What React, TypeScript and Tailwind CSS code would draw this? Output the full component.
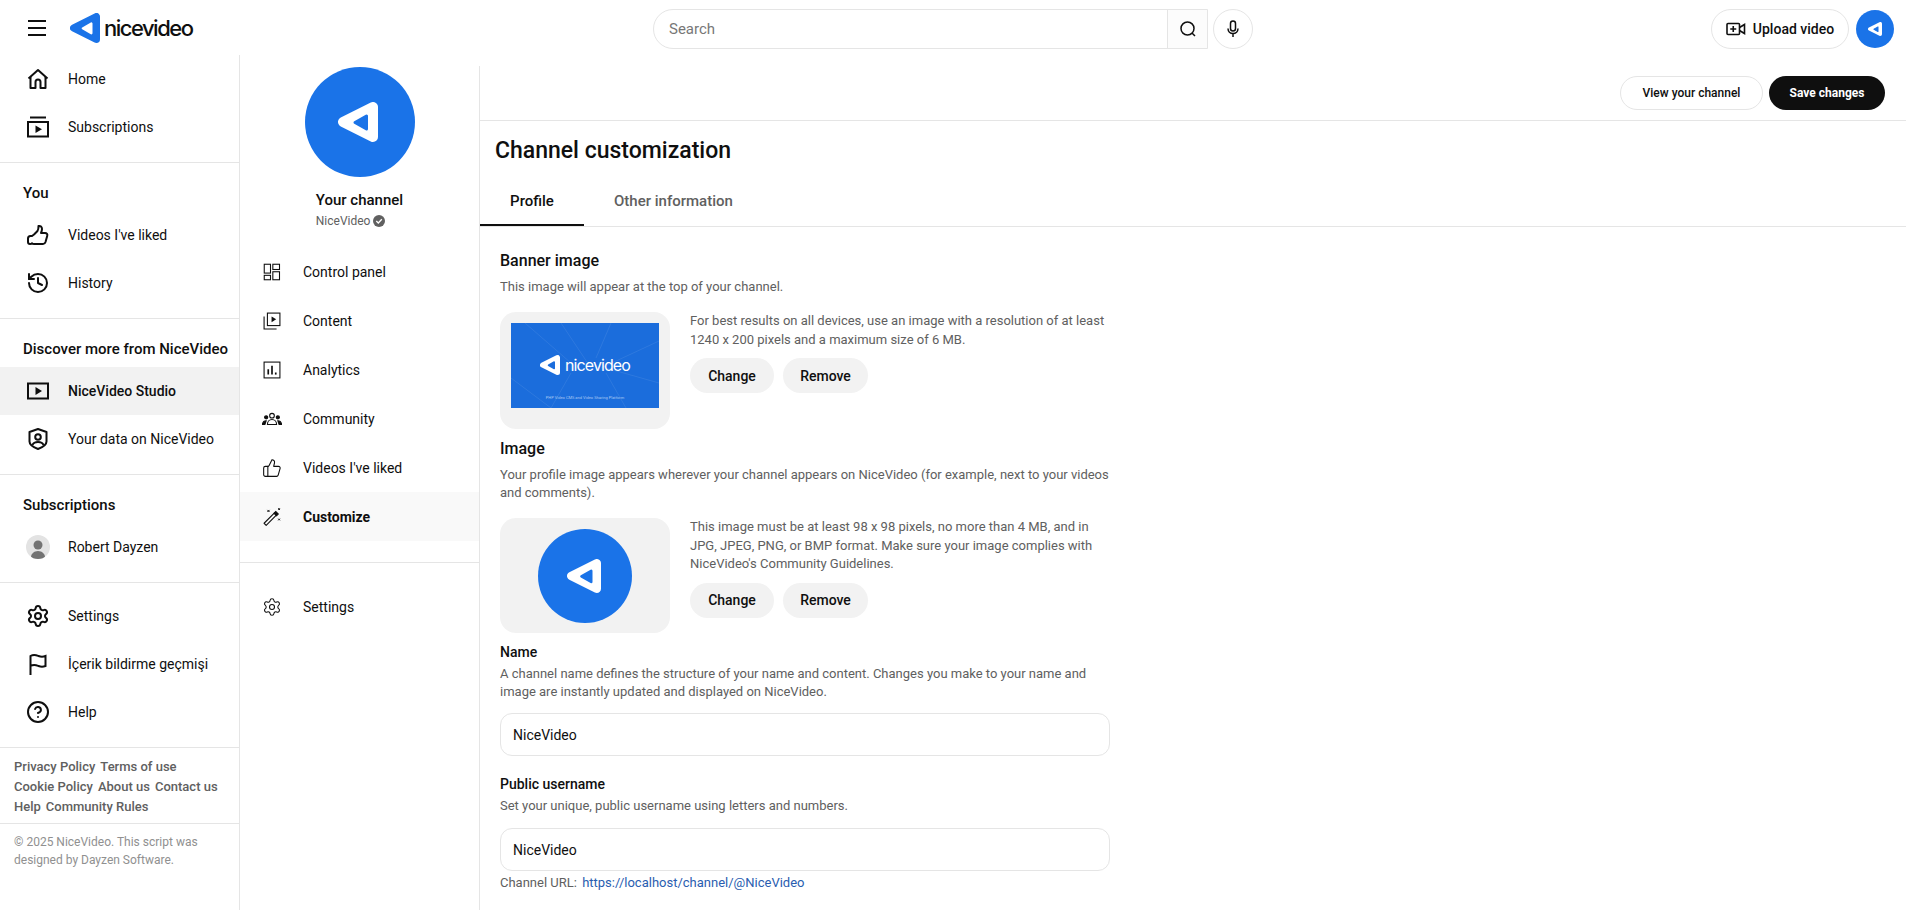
import { CircleHelp, History, Settings, ThumbsUp } from "lucide-react";
import type { ReactNode } from "react";

const Icon = ({ children, size = 24, sw = 2 }: { children: ReactNode; size?: number; sw?: number }) => (
    <svg width={size} height={size} viewBox="0 0 24 24" fill="none" stroke="currentColor" strokeWidth={sw} className="shrink-0">
        {children}
    </svg>
);

// rounded triangle logo mark, hole colour is whatever sits behind it
const Mark = ({ color, hole, className }: { color: string; hole: string; className: string }) => (
    <svg viewBox="0 0 40 40" className={className}>
        <polygon points="5,20 35,5 35,35" fill={color} stroke={color} strokeWidth="10" strokeLinejoin="round" />
        <polygon points="17,20.500 28.500,14 28.500,27" fill={hole} stroke={hole} strokeWidth="3" strokeLinejoin="round" />
    </svg>
);

const HomeIcon = () => (
    <Icon>
        <path d="M2.500 11.500 12 3l9.500 8.500" strokeLinejoin="round" />
        <path d="M4.500 10v11h5v-6a2.500 2.500 0 0 1 5 0v6h5V10" strokeLinejoin="round" />
    </Icon>
);
const SubsIcon = () => (
    <Icon>
        <path d="M4 2.500h16" />
        <rect x="2" y="7" width="20" height="14.500" />
        <path d="M9.500 10.500v7.500l6.500-3.750z" fill="currentColor" stroke="none" />
    </Icon>
);
const HandIcon = () => (
    <Icon>
        <path d="M8 11.500 11.500 8c.8-1 1-3.200 1-5 2-.5 3.500 1 3.500 3 0 1.500-.5 2.800-1 4h4c1.800 0 2.800 1.500 2.200 3l-1.700 6c-.4 1.300-1.300 2-2.500 2H8c-1 0-1.500-.3-2-.8-.5.500-1.200.8-2 .8-1 0-2-1-2-2v-3.500c0-1.500 1-2.500 2.500-2.500H6z" strokeLinejoin="round" />
    </Icon>
);
const StudioIcon = () => (
    <Icon>
        <rect x="2" y="4.500" width="20" height="15" />
        <path d="M9.500 8v8l6.500-4z" fill="currentColor" stroke="none" />
    </Icon>
);
const ShieldIcon = () => (
    <Icon>
        <path d="M12 2 20.500 5v9.500c0 3.500-4.500 6-8.500 7.500-4-1.500-8.500-4-8.500-7.500V5z" strokeLinejoin="round" />
        <circle cx="12" cy="10" r="2.800" />
        <path d="M6.500 18c.8-2 3-3 5.500-3s4.700 1 5.500 3" />
    </Icon>
);
const FlagIcon = () => (
    <Icon>
        <path d="M4.500 23V4c3.500-2 6-.8 8 0s4 1.200 7 0v10c-3 1.200-5 .8-7 0s-4.500-2-8 0" />
    </Icon>
);
const PersonAvatar = () => (
    <div className="flex h-6 w-6 shrink-0 items-end justify-center overflow-hidden rounded-full bg-[#e3e3e3]">
        <svg width="14" height="19" viewBox="0 0 14 19" fill="#737373">
            <circle cx="7" cy="5" r="4.500" />
            <path d="M0 19v-2c0-3 3-6 7-6s7 3 7 6v2z" />
        </svg>
    </div>
);

const DashIcon = () => (
    <Icon size={20} sw={1.3}>
        <rect x="2.700" y="2.700" width="7.500" height="10.600" />
        <rect x="13" y="2.700" width="8" height="6.300" />
        <rect x="2.700" y="16" width="7.500" height="5.300" />
        <rect x="13" y="11.700" width="8" height="9.600" />
    </Icon>
);
const ContentIcon = () => (
    <Icon size={20} sw={1.3}>
        <rect x="6.500" y="2.500" width="15" height="15" />
        <path d="M2.500 6.500v15h15" />
        <path d="M11.500 6.500v7l5.500-3.500z" fill="currentColor" stroke="none" />
    </Icon>
);
const ChartIcon = () => (
    <Icon size={20} sw={1.3}>
        <rect x="2.500" y="2.500" width="19" height="19" />
        <path d="M7.500 11v6.500M12 7v10.500" strokeWidth="2" />
        <path d="M16.500 15v2.500" strokeWidth="2" />
    </Icon>
);
const CommunityIcon = () => (
    <Icon size={20} sw={1.3}>
        <circle cx="12" cy="8" r="2.800" />
        <path d="M6.500 18.500c0-3.500 2.500-6 5.500-6s5.500 2.500 5.500 6z" />
        <circle cx="5" cy="10" r="1.900" fill="currentColor" />
        <circle cx="19" cy="10" r="1.900" fill="currentColor" />
        <path d="M.500 18.500c.3-2.500 2-4.500 4.500-4.500l-1.500 4.500zM23.500 18.500c-.3-2.500-2-4.500-4.500-4.500l1.500 4.500z" fill="currentColor" />
    </Icon>
);
const WandIcon = () => (
    <Icon size={20} sw={1.3}>
        <path d="M2.500 19.500 15 7l2.500 2.500L5 22z" strokeLinejoin="round" />
        <path d="M14 8l2.500-2.500 3 3L17 11" fill="currentColor" />
        <path d="M6.500 3.500l2.500 2.500M9 3.500 6.500 6M19.500 1.500l2 2M21.500 1.500l-2 2M19.500 14l2 2M21.500 14l-2 2" strokeWidth="1.200" />
    </Icon>
);

const navRow = "flex h-12 items-center gap-[18px] pl-[26px] text-sm text-[#0f0f0f]";
const NavRow = ({ icon, label, active }: { icon: ReactNode; label: string; active?: boolean }) => (
    <div className={`${navRow} ${active ? "bg-[#f2f2f2] font-medium" : ""}`}>
        {icon}
        <span>{label}</span>
    </div>
);

const SubRow = ({ icon, label, active }: { icon: ReactNode; label: string; active?: boolean }) => (
    <div className={`flex h-[49px] items-center gap-[21px] pl-[22px] text-sm text-[#0f0f0f] ${active ? "bg-[#f9f9f9] font-bold" : ""}`}>
        {icon}
        <span>{label}</span>
    </div>
);

const SideHeading = ({ children }: { children: ReactNode }) => (
    <div className="h-12 whitespace-nowrap pl-[23px] pt-[18px] text-[15px] leading-6 font-medium text-[#0f0f0f]">{children}</div>
);

const Section = ({ children }: { children: ReactNode }) => <div className="border-b border-[#e5e5e5] pb-[11px]">{children}</div>;

const ChipButtons = () => (
    <div className="mt-[9px] flex gap-[9px]">
        <button className="h-[35px] w-[84px] rounded-full bg-[#f2f2f2] text-sm font-medium text-[#0f0f0f]">Change</button>
        <button className="h-[35px] w-[85px] rounded-full bg-[#f2f2f2] text-sm font-medium text-[#0f0f0f]">Remove</button>
    </div>
);

const LogoText = ({ className }: { className: string }) => (
    <span className={`font-['Inter',sans-serif] font-medium ${className}`}>nicevideo</span>
);

const Banner = () => (
    <div className="relative flex h-[85px] w-[148px] flex-col items-center overflow-hidden bg-[#1b6ddc]">
        <svg viewBox="0 0 148 85" className="absolute inset-0 h-full w-full" fill="none" stroke="#ffffff" strokeOpacity="0.12" strokeWidth="0.7">
            <path d="M14 0 60 40M50 0l30 45M148 18 90 45M148 60 95 45M0 55l40 30M60 50 40 85M95 50l20 35M100 0 85 35" />
        </svg>
        <div className="relative mt-[30px] flex items-center gap-[5px]">
            <Mark color="#ffffff" hole="#1b6ddc" className="h-[24px] w-[20px]" />
            <LogoText className="text-[16px] leading-6 font-normal tracking-[-0.900px] text-white" />
        </div>
        <div className="relative mt-[18px] whitespace-nowrap text-[4px] leading-[6px] text-[#a9c8f3]">PHP Video CMS and Video Sharing Platform</div>
    </div>
);

export default function App() {
    return (
        <div className="flex h-screen flex-col overflow-hidden bg-white font-['Roboto',sans-serif] text-[#0f0f0f]">
            <header className="flex h-[55px] shrink-0 items-center">
                <div className="flex flex-1 items-center">
                    <svg width="24" height="24" viewBox="0 0 24 24" stroke="#0f0f0f" strokeWidth="2" className="ml-[25px] shrink-0">
                        <path d="M3 5h18M3 12h18M3 19h18" />
                    </svg>
                    <Mark color="#1a73e8" hole="#ffffff" className="ml-[21px] h-[30px] w-[30px]" />
                    <LogoText className="ml-[4px] text-[22px] leading-[30px] tracking-[-1.500px]" />
                </div>
                <div className="mt-[2px] flex items-center">
                    <div className="flex h-10 w-[555px] items-center rounded-l-full border border-[#e5e5e5]">
                        <input placeholder="Search" className="h-full min-w-0 flex-1 bg-transparent pl-[15px] text-[15px] outline-none placeholder:text-[#777777]" />
                        <div className="flex h-full w-10 items-center justify-center border-l border-[#e5e5e5] bg-[#fcfcfc]">
                            <svg width="20" height="20" viewBox="0 0 20 20" fill="none" stroke="#0f0f0f" strokeWidth="1.500">
                                <circle cx="9.500" cy="9.500" r="6.500" />
                                <path d="m14 14 3 3" />
                            </svg>
                        </div>
                    </div>
                    <div className="ml-[5px] flex h-10 w-10 items-center justify-center rounded-full border border-[#e5e5e5]">
                        <svg width="20" height="20" viewBox="0 0 20 20" fill="none" stroke="#0f0f0f" strokeWidth="1.500">
                            <rect x="7.500" y="2" width="5" height="10" rx="2.500" />
                            <path d="M5 9.500c0 3 2.200 5 5 5s5-2 5-5M10 14.500V18" />
                        </svg>
                    </div>
                </div>
                <div className="mt-[2px] flex flex-1 items-center justify-end">
                    <div className="flex h-10 w-[138px] items-center justify-center gap-[7px] rounded-full border border-[#e5e5e5] text-sm font-medium">
                        <svg width="20" height="20" viewBox="0 0 20 20" fill="none" stroke="#0f0f0f" strokeWidth="1.600">
                            <rect x="1" y="4.500" width="12.500" height="11" rx="1" />
                            <path d="M7.250 7v6M4.250 10h6" />
                            <path d="M13.500 8.500 18.500 5.500v9l-5-3" />
                        </svg>
                        <span>Upload video</span>
                    </div>
                    <div className="ml-[7px] mr-3 flex h-[38px] w-[38px] items-center justify-center rounded-full bg-[#1a73e8]">
                        <Mark color="#ffffff" hole="#1a73e8" className="h-[14px] w-[14px]" />
                    </div>
                </div>
            </header>

            <div className="flex min-h-0 flex-1">
                <aside className="w-60 shrink-0 border-r border-[#e5e5e5] pt-0">
                    <Section>
                        <NavRow icon={<HomeIcon />} label="Home" />
                        <NavRow icon={<SubsIcon />} label="Subscriptions" />
                    </Section>
                    <Section>
                        <SideHeading>You</SideHeading>
                        <NavRow icon={<HandIcon />} label="Videos I've liked" />
                        <NavRow icon={<History size={24} strokeWidth={2} className="shrink-0" />} label="History" />
                    </Section>
                    <Section>
                        <SideHeading>Discover more from NiceVideo</SideHeading>
                        <NavRow icon={<StudioIcon />} label="NiceVideo Studio" active />
                        <NavRow icon={<ShieldIcon />} label="Your data on NiceVideo" />
                    </Section>
                    <Section>
                        <SideHeading>Subscriptions</SideHeading>
                        <NavRow icon={<PersonAvatar />} label="Robert Dayzen" />
                    </Section>
                    <div className="border-b border-[#e5e5e5] pb-[11px] pt-[9px]">
                        <NavRow icon={<Settings size={24} strokeWidth={2} className="shrink-0" />} label="Settings" />
                        <NavRow icon={<FlagIcon />} label="İçerik bildirme geçmişi" />
                        <NavRow icon={<CircleHelp size={24} strokeWidth={2} className="shrink-0" />} label="Help" />
                    </div>
                    <div className="border-b border-[#e5e5e5] pb-[6px] pl-[14px] pt-[9px] text-[13px] leading-5 font-medium text-[#606060]">
                        <div className="flex gap-[5px]"><span>Privacy Policy</span><span>Terms of use</span></div>
                        <div className="flex gap-[5px]"><span>Cookie Policy</span><span>About us</span><span>Contact us</span></div>
                        <div className="flex gap-[5px]"><span>Help</span><span>Community Rules</span></div>
                    </div>
                    <div className="pl-[14px] pr-4 pt-[9px] text-xs leading-[18px] text-[#909090]">
                        © 2025 NiceVideo. This script was designed by Dayzen Software.
                    </div>
                </aside>

                <aside className="w-[239px] shrink-0">
                    <div className="flex flex-col items-center pt-3">
                        <div className="flex h-[110px] w-[110px] items-center justify-center rounded-full bg-[#1a73e8]">
                            <Mark color="#ffffff" hole="#1a73e8" className="mr-[3px] h-[40px] w-[40px]" />
                        </div>
                        <div className="mt-[11px] inline-flex flex-col items-start">
                            <div className="text-[15px] leading-6 font-medium">Your channel</div>
                            <div className="flex items-center gap-[3px] text-xs leading-[18px] text-[#606060]">
                                NiceVideo
                                <svg width="12" height="12" viewBox="0 0 12 12">
                                    <circle cx="6" cy="6" r="6" fill="#606060" />
                                    <path d="m3.300 6 2 2 3.500-3.800" fill="none" stroke="#ffffff" strokeWidth="1.300" />
                                </svg>
                            </div>
                        </div>
                    </div>
                    <div className="mt-[17px] border-b border-[#e5e5e5] pb-[21px]">
                        <SubRow icon={<DashIcon />} label="Control panel" />
                        <SubRow icon={<ContentIcon />} label="Content" />
                        <SubRow icon={<ChartIcon />} label="Analytics" />
                        <SubRow icon={<CommunityIcon />} label="Community" />
                        <SubRow icon={<ThumbsUp size={20} strokeWidth={1.300} className="shrink-0" />} label="Videos I've liked" />
                        <SubRow icon={<WandIcon />} label="Customize" active />
                    </div>
                    <div className="pt-[19px]">
                        <SubRow icon={<Settings size={20} strokeWidth={1.300} className="shrink-0" />} label="Settings" />
                    </div>
                </aside>

                <main className="mt-[11px] min-w-0 flex-1 border-l border-[#e5e5e5]">
                    <div className="flex h-[55px] items-center justify-end gap-[6px] border-b border-[#e5e5e5] pr-[21px]">
                        <button className="h-[34px] w-[143px] rounded-full border border-[#e5e5e5] text-xs font-medium text-[#0f0f0f]">View your channel</button>
                        <button className="h-[34px] w-[116px] rounded-full bg-[#0f0f0f] text-xs font-bold text-white">Save changes</button>
                    </div>
                    <h1 className="pl-[15px] pt-[15px] text-[23px] leading-[30px] font-medium">Channel customization</h1>
                    <div className="mt-[10px] flex h-[51px] border-b border-[#e5e5e5] text-[15px] font-medium">
                        <div className="flex h-[50px] w-[104px] items-center justify-center border-b-2 border-[#0f0f0f] pt-[2px]">Profile</div>
                        <div className="flex h-[50px] items-center px-[30px] text-[#606060]">Other information</div>
                    </div>

                    <div className="w-[650px] pl-5">
                        <h2 className="mt-[22px] text-base leading-6 font-medium">Banner image</h2>
                        <p className="mt-[5px] text-[13px] leading-[18px] text-[#606060]">This image will appear at the top of your channel.</p>
                        <div className="mt-4 flex gap-5">
                            <div className="flex h-[117px] w-[170px] shrink-0 justify-center rounded-2xl bg-[#f2f2f2] pt-[11px]">
                                <Banner />
                            </div>
                            <div>
                                <p className="w-[430px] text-[13px] leading-[18.500px] text-[#606060]">
                                    For best results on all devices, use an image with a resolution of at least 1240 x 200 pixels and a maximum size of 6 MB.
                                </p>
                                <ChipButtons />
                            </div>
                        </div>

                        <h2 className="mt-2 text-base leading-6 font-medium">Image</h2>
                        <p className="mt-[5px] w-[610px] text-[13px] leading-[18px] text-[#606060]">
                            Your profile image appears wherever your channel appears on NiceVideo (for example, next to your videos and comments).
                        </p>
                        <div className="mt-4 flex gap-5">
                            <div className="flex h-[115px] w-[170px] shrink-0 items-center justify-center rounded-2xl bg-[#f2f2f2]">
                                <div className="flex h-[94px] w-[94px] items-center justify-center rounded-full bg-[#1a73e8]">
                                    <Mark color="#ffffff" hole="#1a73e8" className="mr-[3px] h-[34px] w-[34px]" />
                                </div>
                            </div>
                            <div>
                                <p className="w-[420px] text-[13px] leading-[18.500px] text-[#606060]">
                                    This image must be at least 98 x 98 pixels, no more than 4 MB, and in JPG, JPEG, PNG, or BMP format. Make sure your image complies with NiceVideo's Community Guidelines.
                                </p>
                                <ChipButtons />
                            </div>
                        </div>

                        <h3 className="mt-[9px] text-sm leading-5 font-medium">Name</h3>
                        <p className="mt-[3px] w-[610px] text-[13px] leading-[18px] text-[#606060]">
                            A channel name defines the structure of your name and content. Changes you make to your name and image are instantly updated and displayed on NiceVideo.
                        </p>
                        <input defaultValue="NiceVideo" className="mt-3 h-[43px] w-[610px] rounded-xl border border-[#e5e5e5] px-[12px] text-sm outline-none" />

                        <h3 className="mt-[18px] text-sm leading-5 font-medium">Public username</h3>
                        <p className="mt-[3px] text-[13px] leading-[18px] text-[#606060]">Set your unique, public username using letters and numbers.</p>
                        <input defaultValue="NiceVideo" className="mt-[13px] h-[43px] w-[610px] rounded-xl border border-[#e5e5e5] px-[12px] text-sm outline-none" />
                        <p className="mt-[3px] text-[13px] leading-[18px] text-[#606060]">
                            Channel URL: <a className="ml-[2px] text-[#2a5db0]">https://localhost/channel/@NiceVideo</a>
                        </p>
                    </div>
                </main>
            </div>
        </div>
    );
}
